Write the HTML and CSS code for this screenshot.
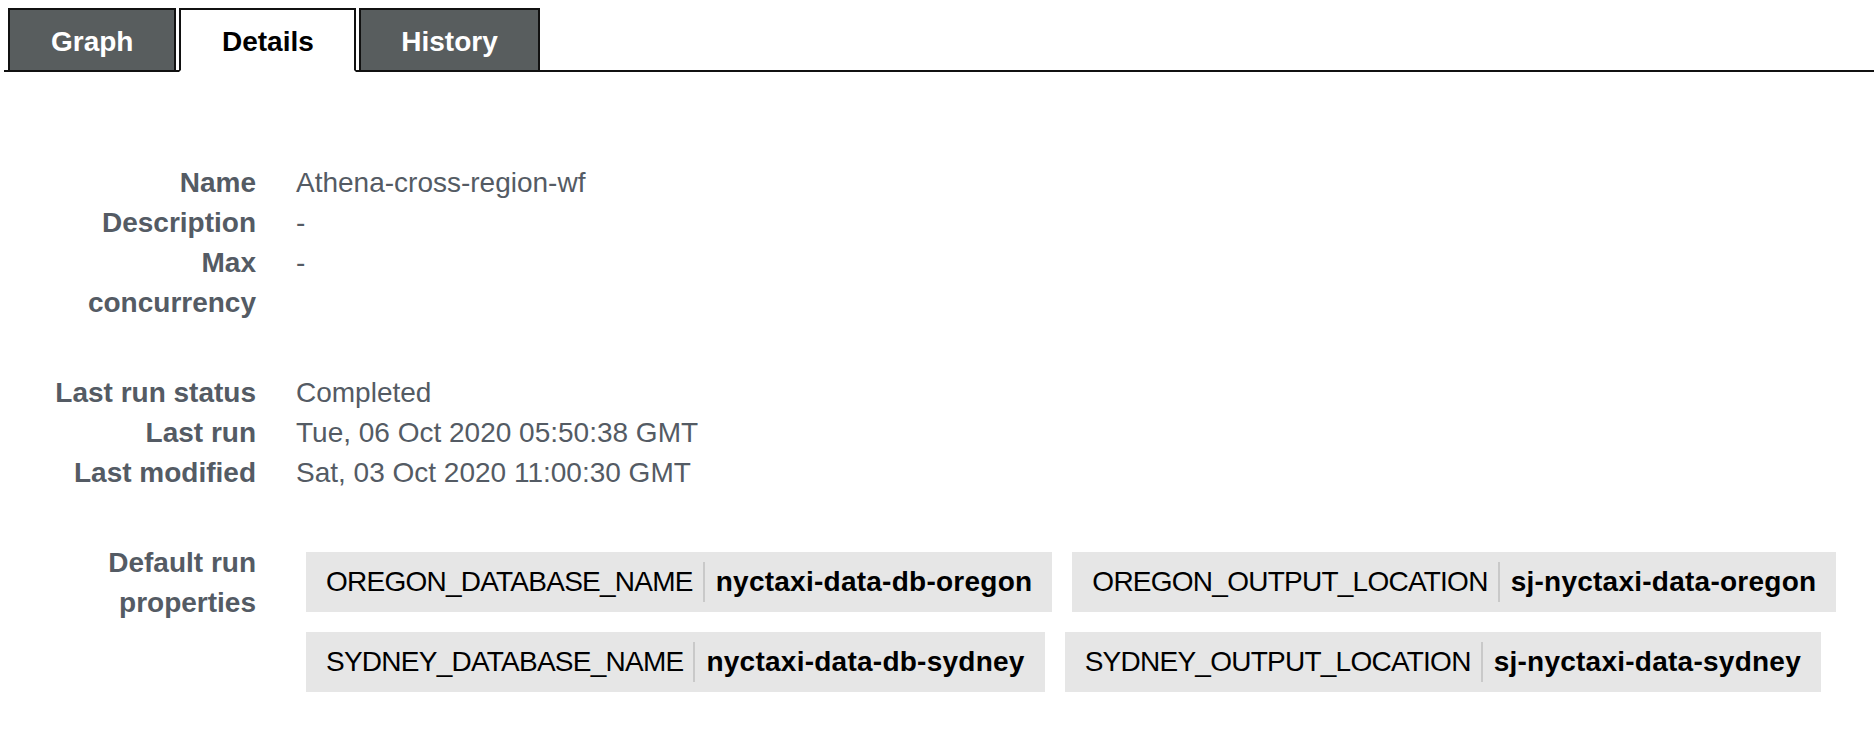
FILE: index.html
```html
<!DOCTYPE html>
<html lang="en">
<head>
<meta charset="utf-8">
<title>Workflow details</title>
<link rel="stylesheet" href="styles.css">
</head>
<body>
<ul class="tabs">
  <li class="tab">Graph</li>
  <li class="tab active">Details</li>
  <li class="tab">History</li>
</ul>
<div class="details">
  <dl class="group">
    <dt>Name</dt><dd>Athena-cross-region-wf</dd>
    <dt>Description</dt><dd>-</dd>
    <dt>Max concurrency</dt><dd>-</dd>
  </dl>
  <dl class="group">
    <dt>Last run status</dt><dd>Completed</dd>
    <dt>Last run</dt><dd>Tue, 06 Oct 2020 05:50:38 GMT</dd>
    <dt>Last modified</dt><dd>Sat, 03 Oct 2020 11:00:30 GMT</dd>
  </dl>
  <dl class="group">
    <dt>Default run properties</dt>
    <dd class="chips">
      <span class="chip"><span class="key">OREGON_DATABASE_NAME</span><span class="val">nyctaxi-data-db-oregon</span></span>
      <span class="chip"><span class="key">OREGON_OUTPUT_LOCATION</span><span class="val">sj-nyctaxi-data-oregon</span></span>
      <span class="chip"><span class="key">SYDNEY_DATABASE_NAME</span><span class="val">nyctaxi-data-db-sydney</span></span>
      <span class="chip"><span class="key">SYDNEY_OUTPUT_LOCATION</span><span class="val">sj-nyctaxi-data-sydney</span></span>
    </dd>
  </dl>
</div>
</body>
</html>
```
FILE: styles.css
```css
html, body {
  margin: 0;
  padding: 0;
  background: #fff;
}
body {
  font-family: "Liberation Sans", Arial, Helvetica, sans-serif;
  font-size: 28px;
  line-height: 40px;
  color: #545b64;
}
.tabs {
  list-style: none;
  margin: 0 0 0 4px;
  padding: 8px 0 0 4px;
  display: flex;
  gap: 3px;
  border-bottom: 2px solid #111;
}
.tab {
  height: 60px;
  line-height: 64px;
  padding: 0 40px;
  margin-bottom: -2px;
  border: 2px solid #111;
  background: #585d5e;
  color: #fff;
  font-weight: bold;
}
.tab:first-child {
  padding: 0 41px;
}
.tab.active {
  background: #fff;
  color: #000;
  border-bottom-color: #fff;
  padding: 0 40.5px;
}
.details {
  padding: 91px 0 0 46px;
}
.group {
  display: grid;
  grid-template-columns: 210px 1fr;
  column-gap: 40px;
  margin: 0 0 50px;
}
.group dt {
  grid-column: 1;
  text-align: right;
  font-weight: bold;
}
.group dd {
  grid-column: 2;
  margin: 0;
}
.chips {
  display: flex;
  flex-wrap: wrap;
  gap: 20px;
  padding: 9px 10px 0;
  align-items: flex-start;
}
.chip {
  display: flex;
  align-items: center;
  background: #e6e6e6;
  color: #000;
  padding: 10px 20px;
}
.key {
  letter-spacing: -0.75px;
  padding-right: 10px;
}
.val {
  font-weight: bold;
  letter-spacing: 0.25px;
  border-left: 2px solid #c9c9c9;
  padding-left: 11px;
}
```
